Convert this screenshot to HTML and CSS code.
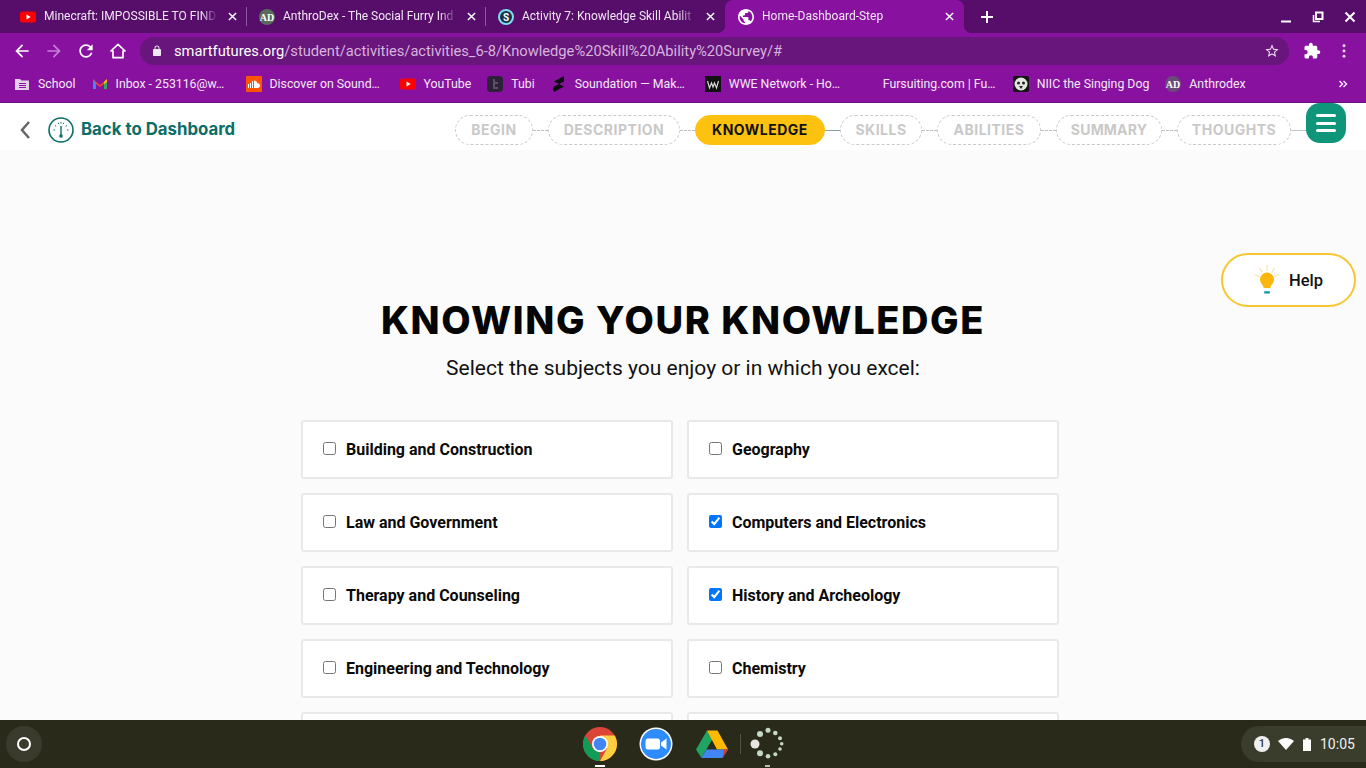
FILE: index.html
```html
<!DOCTYPE html>
<html lang="en">
<head>
<meta charset="utf-8">
<title>Home-Dashboard-Step</title>
<link rel="stylesheet" href="styles.css">
</head>
<body>
<div class="screen">
  <div class="browser">
    <div class="tabstrip">
      <div class="tab sep">
        <svg class="fav" viewBox="0 0 16 16"><rect x="0" y="2.5" width="16" height="11" rx="2.5" fill="#f00"/><path d="M6.5 5.5v5l4.2-2.5z" fill="#fff"/></svg>
        <span class="tab-title">Minecraft: IMPOSSIBLE TO FIND</span>
        <svg class="tab-x" viewBox="0 0 10 10"><path d="M1 1l8 8M9 1l-8 8"/></svg>
      </div>
      <div class="tab sep">
        <svg class="fav" viewBox="0 0 16 16"><circle cx="8" cy="8" r="8" fill="#5a6a5c"/><text x="8" y="12" class="ad">AD</text></svg>
        <span class="tab-title">AnthroDex - The Social Furry Ind</span>
        <svg class="tab-x" viewBox="0 0 10 10"><path d="M1 1l8 8M9 1l-8 8"/></svg>
      </div>
      <div class="tab">
        <svg class="fav" viewBox="0 0 16 16"><circle cx="8" cy="8" r="7" fill="#17324a" stroke="#7fdcec" stroke-width="2"/><text x="8" y="11.500" class="ess">S</text></svg>
        <span class="tab-title">Activity 7: Knowledge Skill Abilit</span>
        <svg class="tab-x" viewBox="0 0 10 10"><path d="M1 1l8 8M9 1l-8 8"/></svg>
      </div>
      <div class="tab active">
        <svg class="fav" viewBox="2 2 20 20"><path fill="#fff" d="M12 2C6.48 2 2 6.48 2 12s4.48 10 10 10 10-4.48 10-10S17.52 2 12 2zm-1 17.93c-3.95-.49-7-3.85-7-7.93 0-.62.08-1.21.21-1.79L9 15v1c0 1.1.9 2 2 2v1.93zm6.9-2.54c-.26-.81-1-1.39-1.9-1.39h-1v-3c0-.55-.45-1-1-1H8v-2h2c.55 0 1-.45 1-1V7h2c1.1 0 2-.9 2-2v-.41c2.93 1.19 5 4.06 5 7.41 0 2.08-.8 3.97-2.1 5.39z"/></svg>
        <span class="tab-title">Home-Dashboard-Step</span>
        <svg class="tab-x" viewBox="0 0 10 10"><path d="M1 1l8 8M9 1l-8 8"/></svg>
      </div>
      <svg class="newtab" viewBox="0 0 12 12"><path d="M6 0v12M0 6h12"/></svg>
      <div class="winctl">
        <svg class="win" viewBox="0 0 12 12"><path d="M1 10.5h10" class="win-line"/></svg>
        <svg class="win" viewBox="0 0 12 12"><path d="M1.500 4v6.500h6.500" class="win-thin"/><rect x="4" y="1.500" width="6.500" height="6.500" class="win-line"/></svg>
        <svg class="win" viewBox="0 0 12 12"><path d="M1.500 1.500l9 9M10.500 1.500l-9 9" class="win-line"/></svg>
      </div>
    </div>

    <div class="toolbar">
      <svg class="nav" viewBox="0 0 24 24"><path fill="#fff" d="M20 11H7.830l5.590-5.590L12 4l-8 8 8 8 1.410-1.410L7.830 13H20v-2z"/></svg>
      <svg class="nav" viewBox="0 0 24 24"><path fill="#c77fd6" d="M4 11h12.170l-5.590-5.590L12 4l8 8-8 8-1.410-1.410L16.170 13H4v-2z"/></svg>
      <svg class="nav" viewBox="0 0 24 24"><path fill="#fff" d="M17.650 6.350C16.200 4.900 14.210 4 12 4c-4.420 0-7.990 3.580-7.990 8s3.570 8 7.990 8c3.730 0 6.840-2.550 7.730-6h-2.080c-.82 2.330-3.040 4-5.650 4-3.310 0-6-2.690-6-6s2.690-6 6-6c1.660 0 3.140.69 4.220 1.780L13 11h7V4l-2.350 2.350z"/></svg>
      <svg class="nav" viewBox="0 0 24 24"><path fill="none" stroke="#fff" stroke-width="2" stroke-linejoin="round" d="M12 4L3.500 12H6v8h12v-8h2.500z"/></svg>
      <div class="omnibox">
        <svg class="lock" viewBox="0 0 24 24"><path fill="#f3e6f6" d="M18 8h-1V6c0-2.760-2.240-5-5-5S7 3.240 7 6v2H6c-1.100 0-2 .9-2 2v10c0 1.100.9 2 2 2h12c1.100 0 2-.9 2-2V10c0-1.100-.9-2-2-2zM9 6c0-1.660 1.340-3 3-3s3 1.340 3 3v2H9V6z"/></svg>
        <span class="url"><span class="host">smartfutures.org</span>/student/activities/activities_6-8/Knowledge%20Skill%20Ability%20Survey/#</span>
        <svg class="star" viewBox="0 0 24 24"><path fill="#eedcf2" d="M22 9.240l-7.190-.62L12 2 9.190 8.630 2 9.240l5.460 4.730L5.820 21 12 17.270 18.180 21l-1.630-7.030L22 9.240zM12 15.400l-3.760 2.270 1-4.280-3.320-2.880 4.380-.38L12 6.100l1.710 4.040 4.380.38-3.320 2.880 1 4.280L12 15.400z"/></svg>
      </div>
      <svg class="ext" viewBox="0 0 24 24"><path fill="#fff" d="M20.500 11H19V7c0-1.100-.9-2-2-2h-4V3.500C13 2.120 11.880 1 10.500 1S8 2.120 8 3.500V5H4c-1.100 0-1.990.9-1.990 2v3.800H3.500c1.490 0 2.700 1.210 2.700 2.700s-1.210 2.700-2.700 2.700H2V20c0 1.100.9 2 2 2h3.800v-1.500c0-1.490 1.210-2.700 2.700-2.700 1.490 0 2.700 1.210 2.700 2.700V22H17c1.100 0 2-.9 2-2v-4h1.500c1.380 0 2.500-1.120 2.500-2.500S21.880 11 20.500 11z"/></svg>
      <svg class="dots" viewBox="0 0 4 16"><circle cx="2" cy="2" r="1.700"/><circle cx="2" cy="8" r="1.700"/><circle cx="2" cy="14" r="1.700"/></svg>
    </div>

    <div class="bookmarks">
      <div class="bm">
        <svg class="bm-ic" viewBox="0 0 16 16"><path fill="#e4cfe9" d="M1 3h5l1.500 1.500H15V14H1z"/><path fill="#8a14a3" d="M5 7h7v1H5zM5 9h7v1H5zM5 11h7v1H5z"/></svg>
        <span class="bm-t">School</span>
      </div>
      <div class="bm">
        <svg class="bm-ic" viewBox="0 0 16 16"><path fill="#ea4335" d="M1 3l7 6 7-6v3L8 11 1 6z"/><path fill="#4285f4" d="M1 4l3 2v7H1z"/><path fill="#34a853" d="M12 6l3-2v9h-3z"/><path fill="#fbbc04" d="M12 6l3-3v3l-3 2z"/></svg>
        <span class="bm-t trunc">Inbox - 253116@w…</span>
      </div>
      <div class="bm">
        <svg class="bm-ic" viewBox="0 0 16 16"><rect width="16" height="16" rx="1" fill="#f50"/><path fill="#fff" d="M2 8h1v4H2zM4 7h1v5H4zM6 5h1v7H6zM8 4.500c2 0 3 1.200 3.300 2.700 1.600-.4 2.700.9 2.700 2.300 0 1.400-1 2.500-2.500 2.500H8z"/></svg>
        <span class="bm-t trunc">Discover on Sound…</span>
      </div>
      <div class="bm">
        <svg class="bm-ic" viewBox="0 0 16 16"><rect x="0" y="2.500" width="16" height="11" rx="2.500" fill="#f00"/><path d="M6.500 5.500v5l4.200-2.500z" fill="#fff"/></svg>
        <span class="bm-t">YouTube</span>
      </div>
      <div class="bm">
        <svg class="bm-ic" viewBox="0 0 16 16"><rect width="16" height="16" rx="4" fill="#2c2136"/><path fill="#5d4f6a" d="M6 3h2v3h3v2H8v3h3v2H6z"/></svg>
        <span class="bm-t">Tubi</span>
      </div>
      <div class="bm">
        <svg class="bm-ic" viewBox="0 0 16 16"><path fill="#0c0c10" d="M13 0L3 5.500 8 8 3 10.500 2 13l1 3 10-5.500L8 8l5-2.500z"/></svg>
        <span class="bm-t trunc">Soundation — Mak…</span>
      </div>
      <div class="bm">
        <svg class="bm-ic" viewBox="0 0 16 16"><rect width="16" height="16" fill="#111"/><path fill="none" stroke="#d8d8d8" stroke-width="1.200" d="M2.500 5l2 7 2-5 1.500 4 1.500-4 2 5 2-7"/></svg>
        <span class="bm-t trunc">WWE Network - Ho…</span>
      </div>
      <div class="bm">
        <span class="bm-ic"></span>
        <span class="bm-t trunc">Fursuiting.com | Fu…</span>
      </div>
      <div class="bm">
        <svg class="bm-ic" viewBox="0 0 16 16"><rect width="16" height="16" rx="2" fill="#151515"/><circle cx="8" cy="8" r="6.500" fill="#e4e6e0"/><circle cx="5.500" cy="7" r="1.500" fill="#222"/><circle cx="10.500" cy="7" r="1.500" fill="#222"/><path fill="#222" d="M6 10h4l-2 3z"/></svg>
        <span class="bm-t">NIIC the Singing Dog</span>
      </div>
      <div class="bm">
        <svg class="bm-ic" viewBox="0 0 16 16"><circle cx="8" cy="8" r="8" fill="#6a4a78"/><text x="8" y="12" class="ad">AD</text></svg>
        <span class="bm-t">Anthrodex</span>
      </div>
      <svg class="chev" viewBox="0 0 10 10"><path d="M1.500 2l3 3-3 3M5.500 2l3 3-3 3"/></svg>
    </div>
  </div>

  <div class="page">
    <header class="head">
      <svg class="back-chev" viewBox="0 0 12 20"><path d="M10 2L3 10l7 8"/></svg>
      <svg class="gauge" viewBox="0 0 26 26">
        <circle cx="13" cy="13" r="12" class="g-ring"/>
        <path class="g-tick" d="M5.500 13h1.500M7 8.500l1.200.8M10.300 5.800l.5 1.300M13 5v1.500M15.700 5.800l-.5 1.300M19 8.500l-1.200.8M19 13h1.500"/>
        <path class="g-needle" d="M13 9v9"/>
        <circle cx="13" cy="19" r="1.800" class="g-hub"/>
      </svg>
      <a class="dash" href="#">Back to Dashboard</a>
      <nav class="steps">
        <span class="step s-begin">BEGIN</span><i class="link"></i>
        <span class="step s-desc">DESCRIPTION</span><i class="link"></i>
        <span class="step s-know current">KNOWLEDGE</span><i class="link solid"></i>
        <span class="step s-skills">SKILLS</span><i class="link"></i>
        <span class="step s-abil">ABILITIES</span><i class="link"></i>
        <span class="step s-summ">SUMMARY</span><i class="link"></i>
        <span class="step s-thou">THOUGHTS</span><i class="link plain"></i>
        <button class="burger" type="button" aria-label="Menu"><b></b><b></b><b></b></button>
      </nav>
    </header>

    <a class="help" href="#">
      <svg class="bulb" viewBox="0 0 30 34">
        <path class="rays" d="M15 1v6M7 4l3 5M23 4l-3 5M2 11l5 3M28 11l-5 3"/>
        <path fill="#fdb60d" d="M15 9a7.500 7.500 0 0 0-7.500 7.500c0 3 1.800 4.700 3 6.300.6.800.8 1.700.8 2.700h7.400c0-1 .2-1.900.8-2.700 1.200-1.600 3-3.300 3-6.300A7.500 7.500 0 0 0 15 9z"/>
        <rect x="12" y="29" width="6" height="2.500" fill="#1397ad"/>
      </svg>
      <span>Help</span>
    </a>

    <main class="content">
      <h1 class="title">KNOWING YOUR KNOWLEDGE</h1>
      <p class="lead">Select the subjects you enjoy or in which you excel:</p>
      <form class="grid">
        <label class="card"><input type="checkbox"><span>Building and Construction</span></label>
        <label class="card"><input type="checkbox"><span>Geography</span></label>
        <label class="card"><input type="checkbox"><span>Law and Government</span></label>
        <label class="card"><input type="checkbox" checked><span>Computers and Electronics</span></label>
        <label class="card"><input type="checkbox"><span>Therapy and Counseling</span></label>
        <label class="card"><input type="checkbox" checked><span>History and Archeology</span></label>
        <label class="card"><input type="checkbox"><span>Engineering and Technology</span></label>
        <label class="card"><input type="checkbox"><span>Chemistry</span></label>
        <div class="card"></div>
        <div class="card"></div>
      </form>
    </main>
  </div>

  <footer class="shelf">
    <div class="launcher"><i class="ring"></i></div>
    <div class="apps">
      <div class="app running">
        <svg class="app-ic" viewBox="0 0 34 34">
          <circle cx="17" cy="17" r="17" fill="#db4437"/>
          <path fill="#0f9d58" d="M17 34A17 17 0 0 1 2.300 8.500L10 21.500l6 3z"/>
          <path fill="#ffcd40" d="M17 34a17 17 0 0 0 14.700-25.500H17l7 13z"/>
          <circle cx="17" cy="17" r="8" fill="#fff"/>
          <circle cx="17" cy="17" r="6.300" fill="#4285f4"/>
        </svg>
      </div>
      <div class="app">
        <svg class="app-ic" viewBox="0 0 34 34">
          <circle cx="17" cy="17" r="16.500" fill="#fff"/>
          <circle cx="17" cy="17" r="15" fill="#2d8cff"/>
          <rect x="6.500" y="11.500" width="14.500" height="11" rx="2.500" fill="#fff"/>
          <path fill="#fff" d="M22 15.500l5.500-4v11l-5.500-4z"/>
        </svg>
      </div>
      <div class="app">
        <svg class="app-ic" viewBox="0 0 34 34">
          <path fill="#1fa463" d="M12 3.500L1 22.500l5.500 8.500L17.500 12z"/>
          <path fill="#ffba00" d="M12 3.500h10.500L33 22.500H22z"/>
          <path fill="#4285f4" d="M11.500 22.500H33L27.500 31H6.500z"/>
          <path fill="#d9362b" d="M27.500 31L33 22.500h-4z"/>
        </svg>
      </div>
      <i class="divider"></i>
      <div class="app running-dim">
        <svg class="app-ic" viewBox="0 0 34 34" fill="#c4d8c6">
          <circle cx="5" cy="17" r="4.500" fill="#e6e6df"/>
          <circle cx="10" cy="7" r="3"/>
          <circle cx="18" cy="3.300" r="2.500"/>
          <circle cx="25.300" cy="6" r="2.300"/>
          <circle cx="30" cy="11.300" r="2"/>
          <circle cx="31.700" cy="16.700" r="1.800"/>
          <circle cx="30" cy="22" r="1.800"/>
          <circle cx="25.300" cy="27.300" r="2"/>
          <circle cx="18" cy="29.300" r="2.300"/>
          <circle cx="10" cy="26.300" r="3"/>
        </svg>
      </div>
    </div>
    <div class="tray">
      <span class="badge">1</span>
      <svg class="wifi" viewBox="0 0 16 12"><path fill="#fff" d="M0 3a12 12 0 0 1 16 0L8 12z"/></svg>
      <svg class="batt" viewBox="0 0 8 13"><path fill="#fff" d="M2.500 0h3v1.500H8V13H0V1.500h2.500z"/></svg>
      <span class="clock">10:05</span>
    </div>
  </footer>
</div>
</body>
</html>
```
FILE: styles.css
```css
* { box-sizing: border-box; }
html, body { margin: 0; padding: 0; height: 100%; overflow: hidden; }
body { font-family: Roboto, "Liberation Sans", sans-serif; color: #000; }

.screen { width: 1366px; height: 768px; display: flex; flex-direction: column; overflow: hidden; }

/* browser chrome */
.browser { flex: none; height: 103px; background: #88129f; border-bottom: 1px solid #6b1080; }
.tabstrip { height: 33px; background: #570e6b; display: flex; align-items: center; padding-left: 8px; color: #f1e6f4; }
.tab { position: relative; width: 239px; height: 33px; padding: 0 10px 0 12px; display: flex; align-items: center; font-size: 12px; flex: none; }
.tab.sep::after { content: ""; position: absolute; right: 0; top: 7px; height: 19px; width: 1px; background: #8a5a98; }
.tab.active { background: #88129f; border-radius: 8px 8px 0 0; align-self: flex-end; padding-left: 13px; }
.tab.active::before, .tab.active::after { content: ""; position: absolute; bottom: 0; width: 8px; height: 8px; }
.tab.active::before { left: -8px; background: radial-gradient(circle at 0 0, transparent 8px, #88129f 8.500px); }
.tab.active::after { right: -8px; background: radial-gradient(circle at 100% 0, transparent 8px, #88129f 8.500px); }
.fav { width: 16px; height: 16px; flex: none; margin-right: 8px; }
.tab-title { flex: 1; min-width: 0; margin-top: -2px; white-space: nowrap; overflow: hidden; -webkit-mask-image: linear-gradient(to right, #000 90%, transparent 100%); mask-image: linear-gradient(to right, #000 90%, transparent 100%); }
.tab-x { width: 9px; height: 9px; flex: none; margin-left: 10px; fill: none; stroke: #fff; stroke-width: 1.600; }
.ad { font: bold 10px "Liberation Serif", serif; fill: #fff; text-anchor: middle; }
.ess { font: bold 10px Roboto, sans-serif; fill: #fff; text-anchor: middle; }
.newtab { width: 12px; height: 12px; margin-left: 17px; fill: none; stroke: #fff; stroke-width: 2; flex: none; }
.winctl { margin-left: auto; display: flex; gap: 20px; padding-right: 10px; }
.win { width: 12px; height: 12px; fill: none; stroke: #fff; }
.win-line { stroke-width: 2; fill: none; }
.win-thin { stroke-width: 1.500; }

.toolbar { height: 35px; display: flex; align-items: center; padding: 0 0 0 12px; }
.nav { width: 20px; height: 20px; flex: none; margin-right: 12px; }
.omnibox { width: 1149px; height: 28px; border-radius: 14px; background: #68157c; display: flex; align-items: center; padding-left: 11px; color: #d7b3de; font-size: 14.700px; flex: none; }
.lock { width: 12px; height: 12px; flex: none; }
.url { margin-left: 11px; white-space: nowrap; flex: 1; }
.host { color: #fff; }
.star { width: 16px; height: 16px; flex: none; margin-right: 9px; }
.ext { width: 18px; height: 18px; margin-left: 14px; flex: none; }
.dots { width: 4px; height: 14px; margin-left: 21px; fill: #f0dff4; flex: none; }

.bookmarks { height: 34px; padding: 0 0 3px 14px; display: flex; align-items: center; gap: 16px; color: #f4e8f6; font-size: 12.300px; }
.bm { display: flex; align-items: center; gap: 8px; flex: none; }
.bm-ic { width: 16px; height: 16px; flex: none; display: block; }
.bm-t { white-space: nowrap; }
.trunc { width: 114px; }
.chev { width: 10px; height: 10px; margin-left: auto; margin-right: 18px; fill: none; stroke: #f0dff4; stroke-width: 1.500; }

/* page */
.page { flex: 1; min-height: 0; position: relative; overflow: hidden; background: #fbfbfb; }
.head { height: 47px; background: #fff; display: flex; align-items: flex-start; padding-left: 19px; }
.back-chev { width: 12px; height: 20px; margin-top: 17px; fill: none; stroke: #666; stroke-width: 2.500; flex: none; }
.gauge { width: 26px; height: 26px; margin: 14px 0 0 17px; flex: none; }
.g-ring { fill: none; stroke: #0c6e68; stroke-width: 1.600; }
.g-tick { fill: none; stroke: #0c6e68; stroke-width: 1; }
.g-needle { fill: none; stroke: #0c6e68; stroke-width: 1.400; }
.g-hub { fill: #0c6e68; }
.dash { margin: 15px 0 0 7px; color: #0c6e68; font: 700 16.800px/22px Inter, sans-serif; text-decoration: none; white-space: nowrap; }
.steps { position: absolute; left: 455px; top: 0; display: flex; align-items: flex-start; height: 47px; }
.step { height: 30px; margin-top: 12px; border: 1px dashed #c9c9c9; border-radius: 15px; color: #c9c9c9; font: 700 14px/27px Inter, sans-serif; letter-spacing: .5px; text-align: center; white-space: nowrap; background: #fff; flex: none; }
.s-begin { width: 78px; }
.s-desc { width: 132px; }
.s-know { width: 130px; }
.s-skills { width: 82px; }
.s-abil { width: 104px; }
.s-summ { width: 106px; letter-spacing: .2px; }
.s-thou { width: 114px; }
.step.current { background: #fdc210; border: 1px solid #fdc210; color: #111; }
.link { width: 15px; height: 0; margin-top: 27px; border-top: 1px dashed #bfbfbf; flex: none; }
.link.solid { border-top: 1px solid #86a3ad; }
.link.plain { border-top: 1px solid #c4c4c4; }
.burger { width: 40px; height: 40px; border: 0; padding: 11px 10px; border-radius: 14px; background: #0e957a; display: flex; flex-direction: column; justify-content: space-between; flex: none; }
.burger b { display: block; height: 3px; width: 20px; background: #fff; border-radius: 2px; }

.help { position: absolute; left: 1221px; top: 150px; width: 135px; height: 54px; border: 2px solid #f7c631; border-radius: 27px; background: #fff; display: flex; align-items: center; padding-left: 30px; gap: 8px; color: #111; font-size: 16.500px; font-weight: 500; text-decoration: none; }
.bulb { width: 28px; height: 32px; flex: none; }
.rays { fill: none; stroke: #f6eab8; stroke-width: 1.500; }

.content { padding-top: 147px; }
.title { margin: 0; text-align: center; font: 800 38px/46px Inter, sans-serif; letter-spacing: 1.600px; color: #050505; }
.lead { margin: 11px 0 38px; text-align: center; font-size: 21px; line-height: 28px; color: #111; }
.grid { display: grid; grid-template-columns: 372px 372px; grid-auto-rows: 59px; gap: 14px; padding-left: 301px; }
.card { display: flex; align-items: center; gap: 10px; padding-left: 20px; background: #fff; border: 2px solid #e9e9e9; border-radius: 3px; font-size: 16px; font-weight: 700; color: #0a0a0a; }
.card input { margin: 0; width: 13px; height: 13px; flex: none; position: relative; top: -1px; }

/* shelf */
.shelf { flex: none; height: 48px; background: #2a2a1b; position: relative; display: flex; align-items: center; }
.launcher { width: 36px; height: 36px; margin-left: 6px; border-radius: 50%; background: #3a3b2c; display: flex; align-items: center; justify-content: center; flex: none; }
.ring { display: block; width: 14px; height: 14px; border: 2px solid #fff; border-radius: 50%; }
.apps { position: absolute; left: 583px; top: 7px; display: flex; align-items: center; gap: 22px; height: 34px; }
.app { width: 34px; height: 34px; position: relative; flex: none; }
.app-ic { width: 34px; height: 34px; display: block; }
.app.running::after, .app.running-dim::after { content: ""; position: absolute; left: 12px; bottom: -6px; width: 10px; height: 2px; background: #fff; }
.app.running-dim::after { left: 15px; width: 5px; background: #bbb; }
.divider { width: 1px; height: 20px; background: #55553f; margin: 0 -13px 0 -11px; flex: none; }
.tray { position: absolute; left: 1241px; top: 6px; width: 125px; height: 36px; background: #3a3d2b; border-radius: 18px 0 0 18px; display: flex; align-items: center; padding-left: 13px; color: #f1f1f1; font-size: 14px; }
.badge { width: 16px; height: 16px; border-radius: 50%; background: #f0f0f0; color: #333; font-size: 11px; font-weight: 500; line-height: 16px; text-align: center; flex: none; }
.wifi { width: 16px; height: 12px; margin-left: 8px; flex: none; }
.batt { width: 8px; height: 13px; margin-left: 9px; flex: none; }
.clock { margin-left: 9px; }
```
